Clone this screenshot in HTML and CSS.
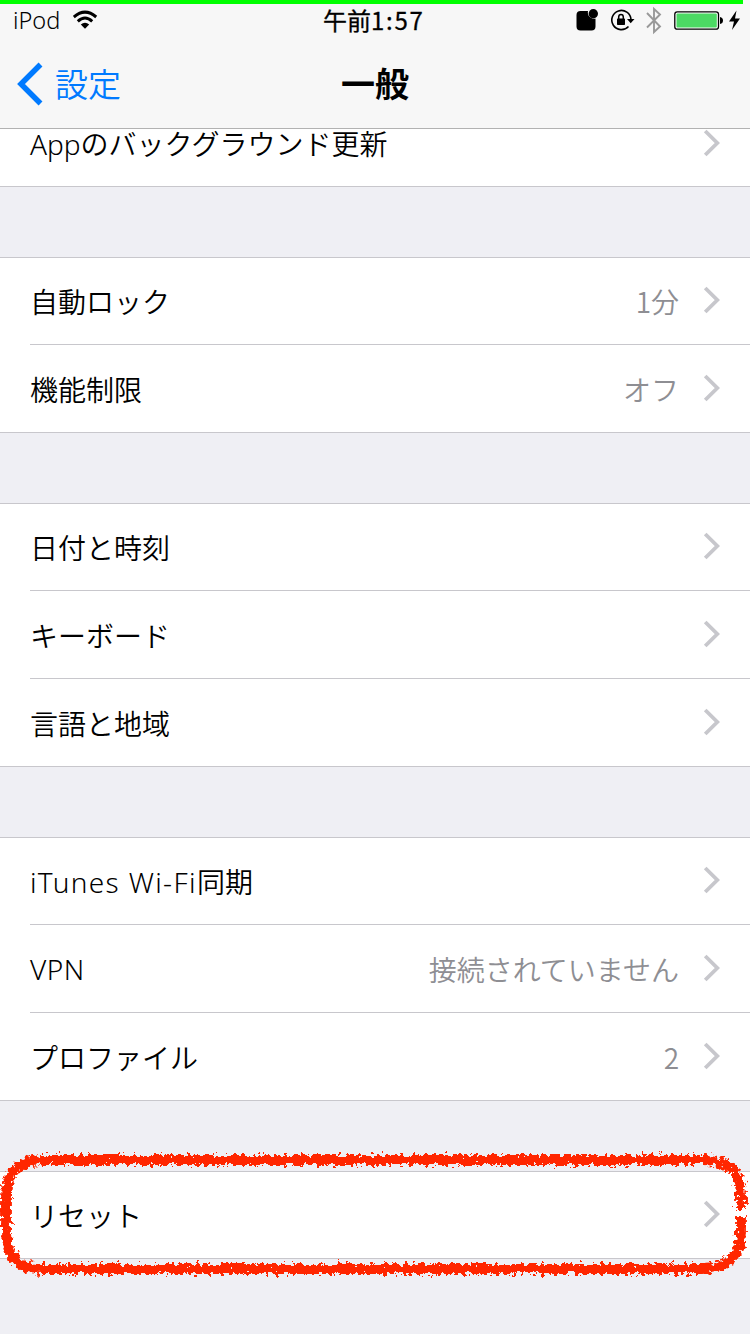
FILE: index.html
```html
<!DOCTYPE html>
<html lang="ja">
<head>
<meta charset="utf-8">
<title>一般</title>
<link rel="stylesheet" href="styles.css">
</head>
<body>
<svg width="0" height="0" class="defs">
  <symbol id="chev" viewBox="0 0 18 28"><path d="M2.2 2 14.3 14 2.2 26" fill="none" stroke="#c7c7cc" stroke-width="3.8"/></symbol>
</svg>
<header class="header">
  <div class="recording"></div>
  <div class="status">
    <div class="carrier"><span class="carrier-name">iPod</span>
      <svg width="26" height="20" viewBox="0 0 26 20"><g fill="none" stroke="#000" stroke-width="3"><path d="M.8 7Q12 -2.700 23.200 7"/><path d="M4.800 11.300Q12 4.700 19.200 11.300"/></g><path d="M7.800 14.500Q12 10.900 16.200 14.500L12 18.700Z"/></svg>
    </div>
    <div class="clock">午前<span class="clock-digits">1:57</span></div>
    <svg class="indicators" width="175" height="32" viewBox="575 4 175 32">
      <path d="M580.500 11H588a6.200 6.200 0 0 0 7.500 7.500V26.500q0 4-4 4h-11q-4 0-4-4V15q0-4 4-4Z"/><circle cx="593.300" cy="13.800" r="4.700"/>
      <path d="M631 19.500A9.600 9.600 0 1 0 628.500 26.500" fill="none" stroke="#000" stroke-width="1.600"/><path d="M627 19h7.500l-3.800 4.200Z"/>
      <rect x="617" y="18.500" width="8" height="6.500" rx=".7"/><path d="M618.700 19v-2a2.300 2.600 0 0 1 4.600 0v2" fill="none" stroke="#000" stroke-width="1.500"/>
      <path d="M647 13 660 26.500 654 32V9l6 5.500L647 27.500" fill="none" stroke="#999" stroke-width="1.900"/>
      <rect x="674.800" y="11.800" width="43.700" height="17.400" rx="2.500" fill="#fff" stroke="#000" stroke-width="1.300"/><rect x="676.500" y="13.500" width="40.300" height="14" rx="1" fill="#4cd964"/><path d="M720 17q3 .5 3 3.500t-3 3.500Z"/>
      <path d="M736.500 10.500 729 21.500h5l-2 8.500 8-11.500h-5Z"/>
    </svg>
  </div>
  <nav class="nav">
    <a class="back"><svg width="26" height="44" viewBox="0 0 26 44"><path d="M23.500 2.500 4 22 23.500 41.500" fill="none" stroke="#007aff" stroke-width="5.500"/></svg><span class="back-label">設定</span></a>
    <h1 class="title">一般</h1>
  </nav>
</header>
<main class="list">
  <section class="group clipped">
    <div class="row"><span class="label"><span class="app">App</span>のバックグラウンド更新</span><svg class="chev"><use href="#chev"/></svg></div>
  </section>
  <section class="group">
    <div class="row"><span class="label">自動ロック</span><span class="value">1分</span><svg class="chev"><use href="#chev"/></svg></div>
    <div class="row"><span class="label">機能制限</span><span class="value">オフ</span><svg class="chev"><use href="#chev"/></svg></div>
  </section>
  <section class="group">
    <div class="row"><span class="label">日付と時刻</span><svg class="chev"><use href="#chev"/></svg></div>
    <div class="row"><span class="label">キーボード</span><svg class="chev"><use href="#chev"/></svg></div>
    <div class="row"><span class="label">言語と地域</span><svg class="chev"><use href="#chev"/></svg></div>
  </section>
  <section class="group">
    <div class="row"><span class="label"><span class="itunes">iTunes Wi-Fi</span>同期</span><svg class="chev"><use href="#chev"/></svg></div>
    <div class="row"><span class="label vpn">VPN</span><span class="value">接続されていません</span><svg class="chev"><use href="#chev"/></svg></div>
    <div class="row"><span class="label">プロファイル</span><span class="value">2</span><svg class="chev"><use href="#chev"/></svg></div>
  </section>
  <section class="group marked">
    <div class="row"><span class="label">リセット</span><svg class="chev"><use href="#chev"/></svg></div>
    <svg class="marker" width="750" height="140" viewBox="0 1145 750 140">
      <defs><filter id="crayon" filterUnits="userSpaceOnUse" x="0" y="1145" width="750" height="140" color-interpolation-filters="sRGB">
        <feTurbulence type="fractalNoise" baseFrequency=".24" numOctaves="3" seed="4"/>
        <feDisplacementMap in="SourceGraphic" scale="12" xChannelSelector="R" yChannelSelector="G"/>
      </filter></defs>
      <path filter="url(#crayon)" d="M741 1210V1194Q740 1160 704 1160H42Q6 1161 6 1196V1234Q7 1269 42 1269H704Q740 1268 741 1234V1217" fill="none" stroke="#ff2600" stroke-width="9.800"/>
    </svg>
  </section>
</main>
</body>
</html>
```
FILE: styles.css
```css
* { box-sizing: border-box; }
body {
  margin: 0;
  width: 750px;
  height: 1334px;
  overflow: hidden;
  display: flex;
  flex-direction: column;
  background: #efeff4;
  color: #000;
  font: 28px/40px "Noto Sans CJK JP", sans-serif;
  font-weight: 350;
}
svg { display: block; flex: none; }
.defs { position: absolute; }
.header {
  height: 129px;
  flex: none;
  background: #f7f7f7;
  border-bottom: 1px solid #b2b2b2;
}
.recording { width: 743px; height: 4px; background: #00ff00; }
.status {
  height: 32px;
  display: grid;
  grid-template-columns: 1fr 104px 1fr;
  line-height: 32px;
}
.carrier { display: flex; align-items: center; gap: 12px; padding-left: 13px; }
.carrier-name { font: 23.500px/32px "Noto Sans", sans-serif; font-weight: 300; width: 48px; white-space: nowrap; }
.clock { font-size: 24px; font-weight: 400; white-space: nowrap; -webkit-text-stroke: .3px #000; }
.clock-digits { letter-spacing: 1.700px; }
.indicators { justify-self: end; }
.nav {
  height: 92px;
  display: grid;
  grid-template-columns: 1fr auto 1fr;
  align-items: center;
}
.back {
  display: flex;
  align-items: center;
  gap: 12px;
  padding-left: 17px;
  margin-top: 4px;
  color: #007aff;
  font-size: 33px;
}
.back-label { padding-bottom: 3px; }
.title { margin: 2px 0 0; font-size: 34px; font-weight: 700; line-height: 44px; }
.list { flex: 1; min-height: 0; display: flex; flex-direction: column; gap: 70px; }
.group { flex: none; background: #fff; border-bottom: 1px solid #c8c7cc; }
.row {
  height: 88px;
  margin-left: 30px;
  padding: 0 29px 2px 0;
  display: flex;
  align-items: center;
  border-bottom: 1px solid #c8c7cc;
}
.group .row:last-of-type { height: 87px; border-bottom: 0; }
.group:not(.clipped) { border-top: 1px solid #c8c7cc; }
.group:not(.clipped) .row:first-child { height: 87px; }
.group:not(.clipped) .row:first-child:last-of-type { height: 86px; }
.group.clipped .row { height: 57px; padding-bottom: 0; align-items: flex-start; }
.clipped .label { line-height: 28px; padding-top: 0; }
.label { flex: 1; white-space: nowrap; padding-top: 2px; }
.value { color: #8e8e93; padding-top: 2px; margin-right: 24px; }
.chev { width: 18px; height: 28px; }
.app, .itunes, .vpn { font-family: "Noto Sans", "Noto Sans CJK JP", sans-serif; }
.app { line-height: 1; }
.itunes { letter-spacing: 1.350px; }
.vpn { letter-spacing: .5px; }
.marked { position: relative; }
.marker { position: absolute; left: 0; top: -27px; }
```
